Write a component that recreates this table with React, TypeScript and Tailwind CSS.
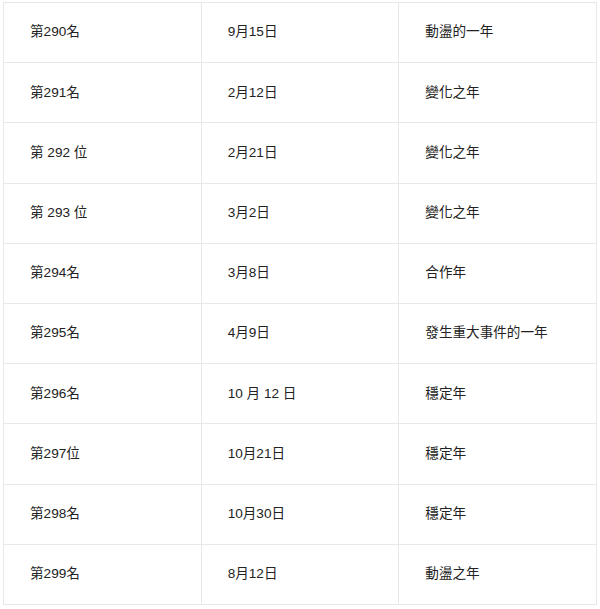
const rows: [string, string, string][] = [
  ["第290名", "9月15日", "動盪的一年"],
  ["第291名", "2月12日", "變化之年"],
  ["第 292 位", "2月21日", "變化之年"],
  ["第 293 位", "3月2日", "變化之年"],
  ["第294名", "3月8日", "合作年"],
  ["第295名", "4月9日", "發生重大事件的一年"],
  ["第296名", "10 月 12 日", "穩定年"],
  ["第297位", "10月21日", "穩定年"],
  ["第298名", "10月30日", "穩定年"],
  ["第299名", "8月12日", "動盪之年"],
]

export default function App() {
  return (
    <div
      className="min-h-[609px] bg-white pl-[3px] pt-[2px]"
      style={{ fontFamily: '"Liberation Sans", "Noto Sans CJK TC", sans-serif' }}
    >
      <table className="w-[594px] table-fixed border-collapse text-[13.6px] text-[#222]">
        <tbody>
          {rows.map((row, i) => (
            <tr key={i} className="h-[60.2px]">
              {row.map((cell, j) => (
                <td key={j} className="border border-[#e8e8e8] px-[26px] align-middle">
                  {cell}
                </td>
              ))}
            </tr>
          ))}
        </tbody>
      </table>
    </div>
  )
}
